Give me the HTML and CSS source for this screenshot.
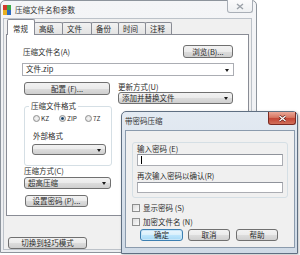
FILE: index.html
```html
<!DOCTYPE html>
<html lang="zh">
<head>
<meta charset="utf-8">
<title>压缩文件名和参数</title>
<link rel="stylesheet" href="styles.css">
</head>
<body>
<div class="win main">
  <div class="titlebar">
    <svg class="appicon" width="8" height="10" viewBox="0 0 8 10">
      <rect x="0" y="0" width="8" height="10" fill="#6a2a7a"/>
      <rect x="0" y="0" width="4" height="5" fill="#d23a2a"/>
      <rect x="4" y="0" width="4" height="5" fill="#3aa845"/>
      <rect x="0" y="5" width="4" height="5" fill="#e8b020"/>
      <rect x="4" y="5" width="4" height="5" fill="#2d6ac0"/>
    </svg>
    <span class="title">压缩文件名和参数</span>
    <div class="close inactive">
      <svg width="8" height="7" viewBox="0 0 8 7"><path d="M1 1 L7 6 M7 1 L1 6" stroke="#9aa0a8" stroke-width="1.4" fill="none"/></svg>
    </div>
  </div>
  <div class="client">
    <div class="tabs">
      <div class="tab sel w28">常规</div>
      <div class="tab w29">高级</div>
      <div class="tab w30">文件</div>
      <div class="tab w28">备份</div>
      <div class="tab w28">时间</div>
      <div class="tab w27">注释</div>
    </div>
    <div class="panel">
      <div class="r1">
        <span>压缩文件名(A)</span>
        <div class="btn browse">浏览(B)...</div>
      </div>
      <div class="combo edit name">文件.zip<span class="arrow"></span></div>
      <div class="r2">
        <div class="leftcol">
          <div class="btn cfg">配置 (F)...</div>
          <fieldset class="group">
            <legend>压缩文件格式</legend>
            <div class="radios">
              <span class="ritem"><span class="radio"></span>KZ</span>
              <span class="ritem"><span class="radio on"></span>ZIP</span>
              <span class="ritem"><span class="radio"></span>7Z</span>
            </div>
            <div class="lbl ext">外部格式</div>
            <div class="combo ext-combo"><span class="arrow"></span></div>
          </fieldset>
        </div>
        <div class="rightcol">
          <div class="lbl">更新方式(U)</div>
          <div class="combo upd">添加并替换文件<span class="arrow"></span></div>
        </div>
      </div>
      <div class="lbl method">压缩方式(C)</div>
      <div class="combo method-combo">超高压缩<span class="arrow"></span></div>
      <div class="btn pwd">设置密码 (P)...</div>
    </div>
    <div class="btn mode">切换到轻巧模式</div>
  </div>
</div>

<div class="win dlg">
  <div class="titlebar dtitle">
    <span class="title">带密码压缩</span>
    <div class="close active">
      <svg width="9" height="7" viewBox="0 0 9 7"><path d="M1.5 1 L7.5 6 M7.5 1 L1.5 6" stroke="#5a1a14" stroke-width="2.6" fill="none"/><path d="M1.5 1 L7.5 6 M7.5 1 L1.5 6" stroke="#fff" stroke-width="1.3" fill="none"/></svg>
    </div>
  </div>
  <div class="dclient">
    <div class="dpanel">
      <div class="lbl d1">输入密码 (E)</div>
      <div class="input i1"><span class="caret"></span></div>
      <div class="lbl d2">再次输入密码以确认(R)</div>
      <div class="input i2"></div>
    </div>
    <div class="check c1"><span class="box"></span>显示密码 (S)</div>
    <div class="check c2"><span class="box"></span>加密文件名 (N)</div>
    <div class="dbuttons">
      <div class="btn default ok">确定</div>
      <div class="btn cancel">取消</div>
      <div class="btn help">帮助</div>
    </div>
  </div>
</div>
</body>
</html>
```
FILE: styles.css
```css
* { box-sizing: border-box; margin: 0; padding: 0; }
body {
  width: 300px; height: 255px; overflow: hidden; position: relative;
  background: #ffffff;
  font-family: "Noto Sans CJK SC", "Noto Sans", sans-serif;
  font-size: 7.5px; line-height: 10px; color: #2a2a2a;
}
.win { display: flex; flex-direction: column; }
.main {
  width: 257px; height: 253px;
  border: 1px solid #8d949c; border-radius: 5px 5px 0 0;
  background: linear-gradient(#f4f5f7, #eceef1);
}
.titlebar { height: 17px; display: flex; align-items: center; flex: none; }
.main .titlebar { padding-left: 2px; }
.appicon { margin-right: 4px; }
.title { color: #333; }
.close {
  margin-left: auto; align-self: flex-start;
  display: flex; align-items: center; justify-content: center;
  border-radius: 0 0 3px 3px;
}
.close.inactive {
  width: 26px; height: 13px; margin-right: 3px; margin-top: -1px;
  border: 1px solid #a9afb7; border-top: none;
  background: linear-gradient(#fbfbfc, #eef0f2);
}
.client {
  flex: 1; margin: 0 4px 2px 2px;
  border: 1px solid #bcc2c9; background: #f0f0f0;
  display: flex; flex-direction: column;
}
.tabs { display: flex; align-items: flex-end; height: 15px; margin-left: 4px; }
.tab {
  height: 12px; padding-left: 4px; line-height: 11px;
  border: 1px solid #898c95; border-bottom: none; margin-right: -1px;
  background: linear-gradient(#f2f2f2, #e3e3e3);
  border-radius: 2px 2px 0 0;
}
.tab.sel {
  height: 16px; margin-bottom: -1px; margin-left: -1px; position: relative; z-index: 1;
  background: #ffffff; padding-top: 3px; padding-left: 5px;
}
.w27 { width: 27px; } .w28 { width: 28px; } .w29 { width: 29px; } .w30 { width: 30px; }
.panel {
  margin-left: 2px; width: 243px; height: 182px;
  border: 1px solid #898c95; background: #ffffff;
  display: flex; flex-direction: column;
}
.btn {
  height: 13px; border: 1px solid #707070; border-radius: 3px;
  background: linear-gradient(#f2f2f2 0, #ebebeb 50%, #dddddd 50%, #cfcfcf 100%);
  display: flex; align-items: center; justify-content: center;
  color: #2a2a2a; flex: none;
}
.btn.default {
  border-color: #3c7fb1;
  background: linear-gradient(#eaf6fd 0, #d9f0fc 50%, #bee6fd 50%, #a7d9f5 100%);
  box-shadow: inset 0 0 0 1px #c8e6f8;
}
.r1 {
  margin-top: 10px; padding: 0 15px 0 16px; height: 13px;
  display: flex; align-items: center; justify-content: space-between;
}
.browse { width: 50px; }
.combo {
  position: relative; height: 12px; flex: none;
  border: 1px solid #707070; border-radius: 3px;
  background: linear-gradient(#f2f2f2 0, #ebebeb 50%, #dddddd 50%, #cfcfcf 100%);
  padding-left: 3px; line-height: 10px;
}
.combo.edit { background: #ffffff; border-color: #abadb3; border-radius: 0; }
.arrow {
  position: absolute; right: 4px; top: 50%; margin-top: -1px;
  border-left: 2.5px solid transparent; border-right: 2.5px solid transparent;
  border-top: 3px solid #1a1a1a;
}
.name { margin: 5px 0 0 15px; width: 212px; height: 13px; }
.r2 { margin-top: 6px; display: flex; padding-left: 17px; }
.leftcol { width: 87px; display: flex; flex-direction: column; }
.cfg { width: 86px; }
.group {
  margin-top: 6px; height: 65px;
  border: 1px solid #d5dfe5; border-radius: 3px;
  padding: 2px 0 0 8px;
}
.group legend { margin-left: -4px; padding: 0 2px; line-height: 10px; font-size: 7.5px; }
.radios { display: flex; height: 10px; align-items: center; }
.ritem { width: 26px; display: flex; align-items: center; font-size: 6.5px; }
.radio {
  width: 7px; height: 7px; border-radius: 50%; margin-right: 1px;
  border: 1px solid #8e8f8f;
  background: radial-gradient(circle, #f4f4f4 0, #dcdcdc 100%);
}
.radio.on { background: radial-gradient(circle, #1a3a5a 0, #2e5f8a 35%, #dcdcdc 45%, #f4f4f4 100%); }
.lbl { height: 10px; flex: none; }
.ext { margin-top: 8px; }
.ext-combo { margin: 3px 0 0 -1px; width: 74px; height: 11px; }
.rightcol { margin-left: 7px; display: flex; flex-direction: column; }
.upd { width: 115px; }
.method { margin-left: 17px; }
.method-combo { margin: 1px 0 0 17px; width: 87px; }
.pwd { margin: 6px 0 0 18px; width: 63px; height: 12px; }
.mode { margin: 21px 0 0 4px; width: 79px; height: 12px; }

.dlg {
  position: absolute; left: 121px; top: 111px; width: 177px; height: 143px;
  border: 1px solid #5f6f82; border-radius: 5px 5px 0 0;
  background: linear-gradient(#e3eaf2, #cfdae6);
  box-shadow: 1px 1px 3px rgba(0,0,0,0.25);
}
.dtitle { height: 18px; padding-left: 3px; }
.close.active {
  width: 28px; height: 13px; margin-right: 1px;
  border: 1px solid #7a2a22; border-top: none;
  background: linear-gradient(#eaa898 0, #d77763 45%, #c34636 55%, #d2705a 100%);
}
.dclient {
  flex: 1; margin: 0 2px 5px 3px;
  border: 1px solid #8b9bad; background: #f0f0f0;
  display: flex; flex-direction: column;
}
.dpanel {
  margin: 11px 0 0 6px; width: 156px; height: 56px;
  border: 1px solid #d5dfe5; border-radius: 3px;
  padding: 0 0 0 4px; display: flex; flex-direction: column;
}
.d1 { margin-top: 1px; }
.d2 { margin-top: 5px; }
.input {
  width: 146px; height: 12px; flex: none;
  border: 1px solid #abadb3; border-top-color: #8f939b; background: #fff;
  display: flex; align-items: center;
}
.i2 { margin-top: 1px; height: 11px; }
.caret { width: 1px; height: 8px; background: #000; margin-left: 3px; }
.check { height: 10px; display: flex; align-items: center; margin-left: 6px; }
.c1 { margin-top: 5px; }
.c2 { margin-top: 4px; }
.box {
  width: 8px; height: 8px; margin-right: 3px;
  border: 1px solid #8e8f8f;
  background: linear-gradient(135deg, #dcdcdc, #fbfbfb);
}
.dbuttons { display: flex; margin: 2px 0 0 14px; }
.dbuttons .btn { height: 12px; }
.ok { width: 43px; }
.cancel { width: 42px; margin-left: 5px; }
.help { width: 42px; margin-left: 6px; }
```
